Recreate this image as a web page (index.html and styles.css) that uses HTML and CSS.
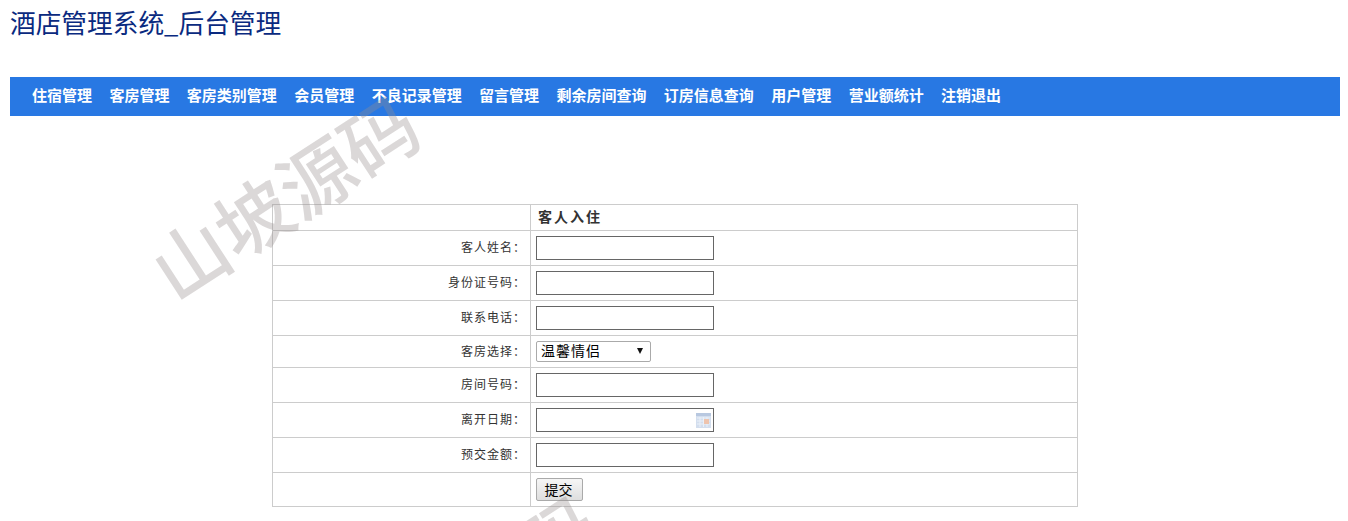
FILE: index.html
```html
<!DOCTYPE html>
<html lang="zh-CN">
<head>
<meta charset="utf-8">
<title>酒店管理系统_后台管理</title>
<link rel="stylesheet" href="styles.css">
</head>
<body>
<h1 class="title">酒店管理系统_后台管理</h1>
<nav class="nav">
  <a>住宿管理</a><a>客房管理</a><a>客房类别管理</a><a>会员管理</a><a>不良记录管理</a><a>留言管理</a><a>剩余房间查询</a><a>订房信息查询</a><a>用户管理</a><a>营业额统计</a><a>注销退出</a>
</nav>
<form class="form">
<table class="tbl">
  <tr class="r26"><td></td><th>客人入住</th></tr>
  <tr class="r35"><td>客人姓名：</td><td class="f"><input type="text"></td></tr>
  <tr class="r35"><td>身份证号码：</td><td class="f"><input type="text"></td></tr>
  <tr class="r35"><td>联系电话：</td><td class="f"><input type="text"></td></tr>
  <tr class="r32"><td>客房选择：</td><td class="f"><span class="sel">温馨情侣<i class="arrow"></i></span></td></tr>
  <tr class="r35"><td>房间号码：</td><td class="f"><input type="text"></td></tr>
  <tr class="r35"><td>离开日期：</td><td class="f"><span class="date"><input type="text">
    <svg class="cal" width="15" height="15" viewBox="0 0 15 15"><rect width="15" height="15" fill="#d3deee"/><rect y="0" width="15" height="3" fill="#b8c8e0"/><path d="M1 5h13M1 8h13M1 11h13M4 4v10M7.500 4v10M11 4v10" stroke="#eaf0f8"/><rect x="8" y="6" width="5" height="5" fill="#eec4ae"/></svg></span></td></tr>
  <tr class="r35"><td>预交金额：</td><td class="f"><input type="text"></td></tr>
  <tr class="r34"><td></td><td class="f"><button type="button" class="btn">提交</button></td></tr>
</table>
</form>
<div class="wm wm1">山坡源码</div>
<div class="wm wm2">山坡源码</div>
</body>
</html>
```
FILE: styles.css
```css
html, body { margin: 0; padding: 0; background: #fff; }
body { padding: 0 8px 0 10px; height: 521px; overflow: hidden; position: relative; font-family: "Noto Sans CJK SC", "Liberation Sans", sans-serif; color: #333; }
.title { margin: 0; height: 77px; padding-top: 5px; box-sizing: border-box; font-size: 25.700px; line-height: 34px; font-weight: 400; color: #0a2a80; }
.nav { display: flex; gap: 17.4px; height: 39px; box-sizing: border-box; align-items: center; padding: 0 0 4px 22px; background: #2878e3; font-size: 15px; font-weight: 700; color: #fff; }
.form { display: block; padding-top: 88px; }
.tbl { width: 806px; margin-left: 262px; border-collapse: collapse; table-layout: fixed; font-size: 12px; letter-spacing: 1px; }
.tbl td, .tbl th { border: 1px solid #ccc; padding: 0; }
.tbl td:first-child { width: 258px; text-align: right; padding: 0 4px 3px 0; box-sizing: border-box; }
.tbl th { text-align: left; padding: 0 0 3px 7px; font-size: 14px; letter-spacing: 2px; }
.f { padding-left: 5px !important; }
.r26 { height: 26px; } .r35 { height: 35px; } .r32 { height: 32px; } .r34 { height: 34px; }
input { display: block; box-sizing: border-box; width: 178px; height: 24px; margin: 0; border: 1px solid #666; background: transparent; padding: 0; }
.date { display: block; position: relative; width: 178px; }
.cal { position: absolute; right: 3px; top: 5px; }
.sel { display: flex; align-items: center; box-sizing: border-box; width: 115px; height: 21px; border: 1px solid #aaa; border-radius: 2px; padding: 0 0 3px 4px; font-size: 14px; color: #000; background: #fff; position: relative; }
.arrow { position: absolute; right: 7px; top: 6px; border: 3px solid transparent; border-top: 6px solid #111; border-bottom: 0; }
.btn { display: block; width: 47px; height: 23px; padding: 0 2px 2px 0; margin: 0; border: 1px solid #aaa; border-radius: 2px; background: linear-gradient(#f6f6f6, #dedede); font: 14px "Noto Sans CJK SC", sans-serif; color: #000; }
.wm { position: absolute; font-size: 75px; font-weight: 500; line-height: 1; color: rgba(150, 140, 140, 0.34); white-space: nowrap; transform: rotate(-33deg); pointer-events: none; }
.wm1 { left: 133px; top: 157px; }
.wm2 { left: 313px; top: 557px; }
```
